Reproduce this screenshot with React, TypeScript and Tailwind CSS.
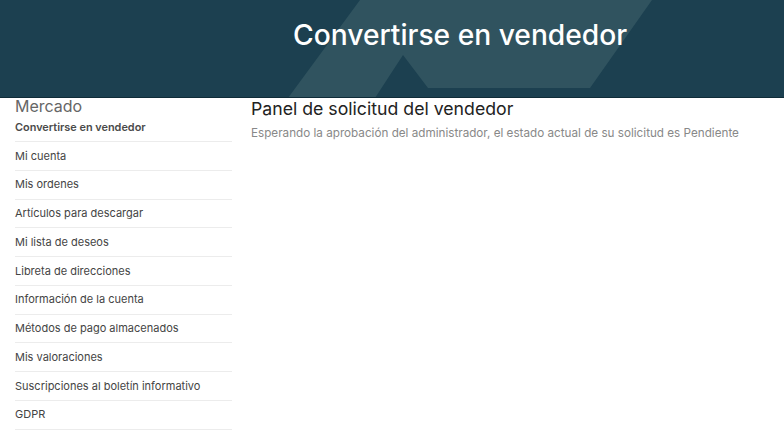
const menu = [
  "Mi cuenta",
  "Mis ordenes",
  "Artículos para descargar",
  "Mi lista de deseos",
  "Libreta de direcciones",
  "Información de la cuenta",
  "Métodos de pago almacenados",
  "Mis valoraciones",
  "Suscripciones al boletín informativo",
  "GDPR",
]

function Banner() {
  return (
    <div className="relative h-[98px] overflow-hidden bg-[#1c4050] border-b border-[#0f2c38]">
      {/* faded chevron mark behind the title */}
      <svg
        className="absolute left-0 top-0"
        width="784"
        height="98"
        viewBox="0 0 784 98"
      >
        <polygon
          points="360,0 652,0 590,88 428,88 403,55 375,98 288,98"
          fill="#30535f"
        />
      </svg>
      <h1 className="relative pl-[293px] pt-[17px] text-[28.2px] font-medium leading-[37px] text-white">
        Convertirse en vendedor
      </h1>
    </div>
  )
}

export default function App() {
  return (
    <div
      className="min-h-screen bg-white"
      style={{ fontFamily: "Inter, 'Noto Sans', sans-serif" }}
    >
      <Banner />
      <div className="flex">
        <aside className="ml-[15px] w-[217px] shrink-0">
          <div className="text-[16px] leading-[16px] text-[#666]">
            Mercado
          </div>
          <div className="flex h-[28px] items-center border-b border-[#ececec] pb-[1px] text-[10.9px] font-semibold text-[#4a4a4a]">
            Convertirse en vendedor
          </div>
          {menu.map((item) => (
            <div
              key={item}
              className="flex h-[28.75px] items-center border-b border-[#ececec] text-[11px] text-[#444]"
            >
              {item}
            </div>
          ))}
        </aside>
        <main className="ml-[19px] pt-[0px]">
          <h2 className="text-[17.7px] leading-[22px] text-[#222]">
            Panel de solicitud del vendedor
          </h2>
          <p className="mt-[5px] text-[11.7px] leading-[16px] text-[#888]">
            Esperando la aprobación del administrador, el estado actual de su
            solicitud es Pendiente
          </p>
        </main>
      </div>
    </div>
  )
}
